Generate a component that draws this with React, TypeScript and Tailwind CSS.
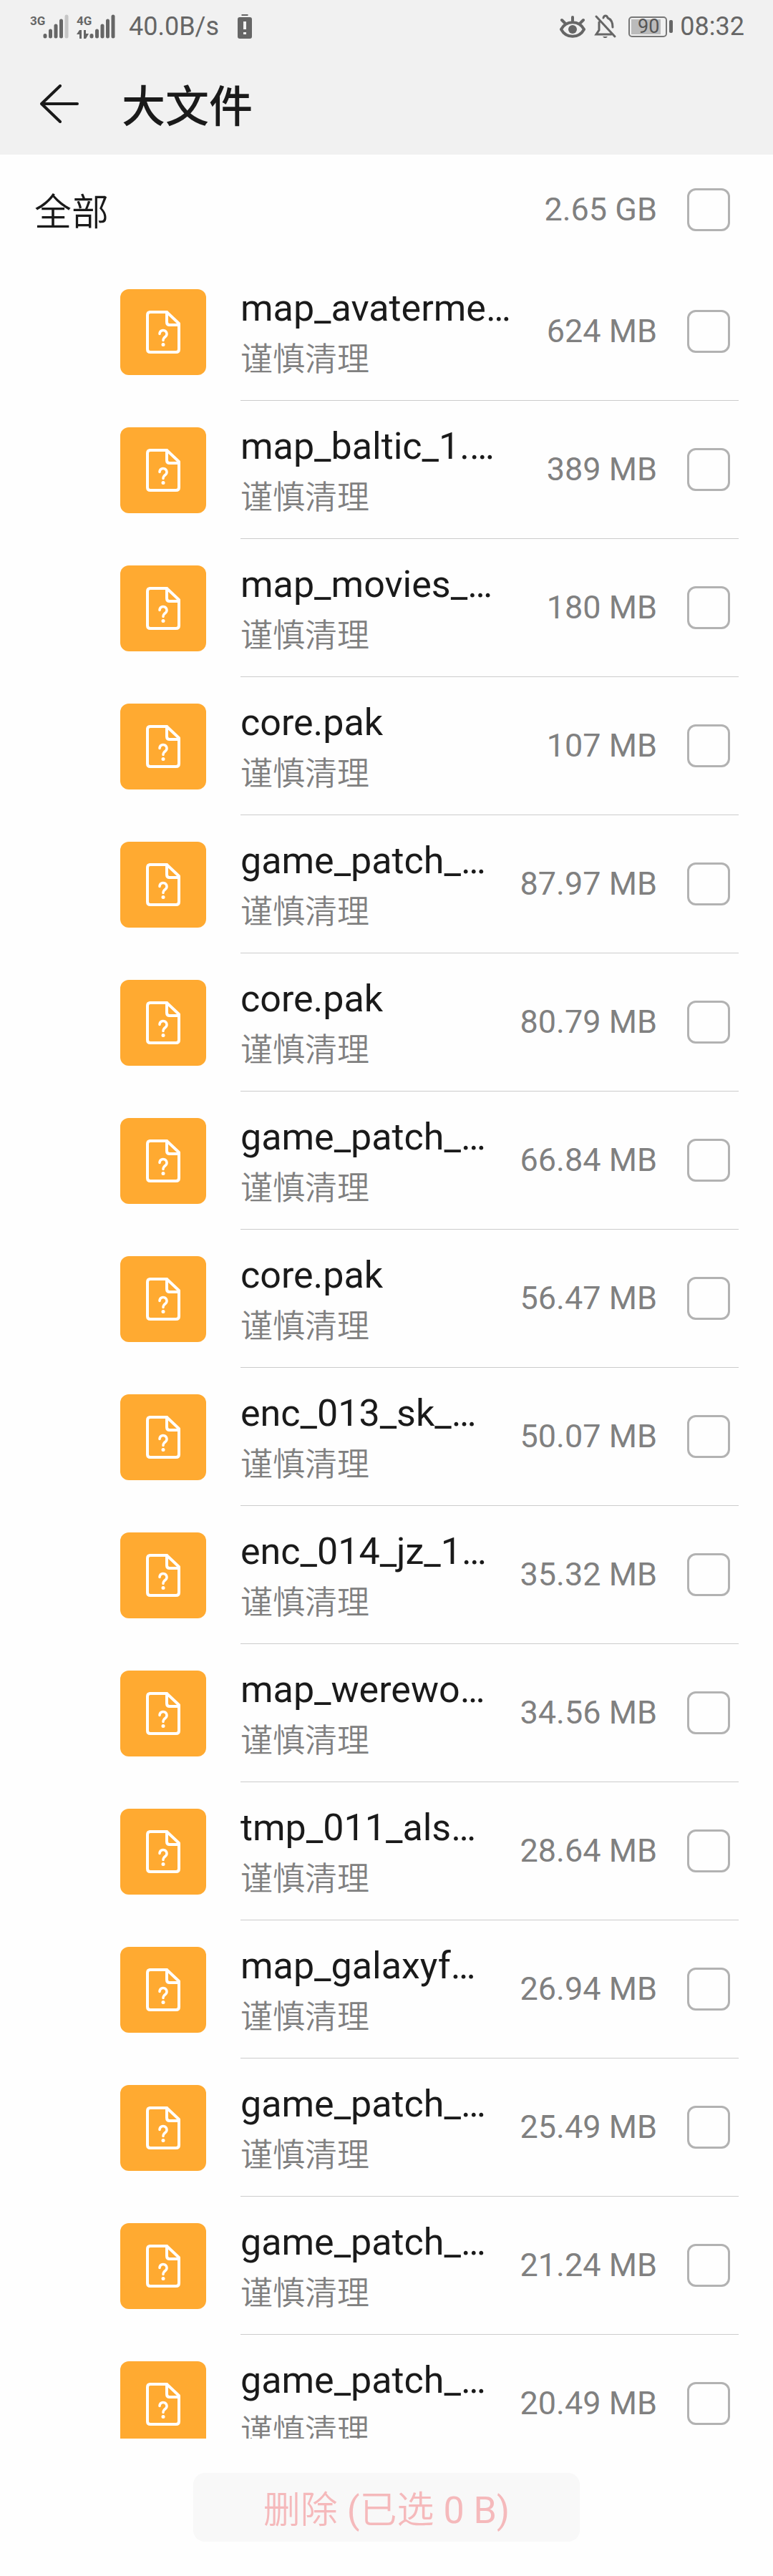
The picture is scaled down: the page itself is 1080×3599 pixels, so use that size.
import { useState } from 'react';

interface FileItem {
  id: number;
  name: string;
  size: string;
}

const files: FileItem[] = [
  { id: 1, name: 'map_avaterme…', size: '624 MB' },
  { id: 2, name: 'map_baltic_1.…', size: '389 MB' },
  { id: 3, name: 'map_movies_…', size: '180 MB' },
  { id: 4, name: 'core.pak', size: '107 MB' },
  { id: 5, name: 'game_patch_…', size: '87.97 MB' },
  { id: 6, name: 'core.pak', size: '80.79 MB' },
  { id: 7, name: 'game_patch_…', size: '66.84 MB' },
  { id: 8, name: 'core.pak', size: '56.47 MB' },
  { id: 9, name: 'enc_013_sk_…', size: '50.07 MB' },
  { id: 10, name: 'enc_014_jz_1…', size: '35.32 MB' },
  { id: 11, name: 'map_werewo…', size: '34.56 MB' },
  { id: 12, name: 'tmp_011_als…', size: '28.64 MB' },
  { id: 13, name: 'map_galaxyf…', size: '26.94 MB' },
  { id: 14, name: 'game_patch_…', size: '25.49 MB' },
  { id: 15, name: 'game_patch_…', size: '21.24 MB' },
  { id: 16, name: 'game_patch_…', size: '20.49 MB' },
];

function SignalBars({ weak }: { weak?: boolean }) {
  return (
    <svg width="36" height="34" viewBox="0 0 36 34" stroke="#666" strokeWidth="5" strokeLinecap="round">
      <path d="M3 29.500v1.500M10.500 23v8M18 16v15M25.500 9v22" />
      <path d="M33 3v28" stroke={weak ? '#c6c6c6' : '#666'} />
    </svg>
  );
}

function StatusBar() {
  return (
    <div className="flex h-[74px] items-center justify-between pl-[42px] pr-10 text-[36px] leading-[42px] text-[#666]">
      <div className="flex items-center">
        <div className="flex">
          <span className="h-[34px] w-[18px] text-[17px] leading-[18px] font-bold">3G</span>
          <SignalBars weak />
        </div>
        <div className="ml-[11px] flex">
          <div className="flex h-[34px] w-[18px] flex-col justify-between">
            <span className="text-[17px] leading-[18px] font-bold">4G</span>
            <svg width="17" height="12" viewBox="0 0 17 12" fill="#666">
              <path d="M4 0h3v12H4V6H0zM10 0h3v5h4l-4 7h-3z" />
            </svg>
          </div>
          <SignalBars />
        </div>
        <span className="ml-[19px]">40.0B/s</span>
        <svg className="ml-[26px]" width="20" height="34" viewBox="0 0 20 34">
          <path d="M5.500 1h9" stroke="#666" strokeWidth="2" />
          <rect y="4" width="20" height="30" rx="3" fill="#666" />
          <path d="M10 10v11M10 25v3" stroke="#f1f1f1" strokeWidth="4" />
        </svg>
      </div>
      <div className="flex items-center">
        <svg width="36" height="34" viewBox="0 0 36 34" fill="none" stroke="#666" strokeWidth="4" strokeLinecap="round">
          <path d="M2 21C9 8 27 8 34 21C27 34 9 34 2 21ZM18 9V4M7 12L3 8M29 12L33 8" />
          <circle cx="18" cy="21" r="6" fill="#666" stroke="none" />
        </svg>
        <svg className="ml-3" width="32" height="34" viewBox="0 0 32 34" fill="none" stroke="#666" strokeWidth="3">
          <path d="M3 3l26 28M13 5c1-4 5-4 6 0c5 2 7 6 7 13M7 11v11l-4 6h21" strokeLinecap="round" />
          <path d="M12 31h7l-2 2h-3z" fill="#666" stroke="none" />
        </svg>
        <div className="ml-4 flex items-center gap-[3px]">
          <div className="h-[29px] w-[54px] rounded-[5px] border-2 border-[#777] p-[2px]">
            <div className="flex h-full w-[41px] items-center justify-end bg-[#bbb] pr-[2px] text-[27px] leading-[21px] text-[#555]">90</div>
          </div>
          <div className="h-[18px] w-[5px] rounded-[2px] bg-[#666]" />
        </div>
        <span className="ml-[10px]">08:32</span>
      </div>
    </div>
  );
}

function FileIcon() {
  return (
    <div className="flex size-[120px] shrink-0 items-center justify-center rounded-xl bg-[#ffaa31]">
      <svg width="48" height="60" viewBox="0 0 48 60" fill="none" stroke="#fff" strokeWidth="4" strokeLinejoin="round" strokeLinecap="round">
        <path d="M5 2h24l17 16v36q0 4-4 4H6q-4 0-4-4V6q0-4 4-4" />
        <path d="M29 2v14q0 4 4 4h13" />
        <path d="M19 32.500a5 5 0 1 1 8.500 3.500q-3.500 2.500-3.500 5.500" strokeWidth="3.500" />
        <circle cx="24" cy="47.500" r="2.500" fill="#fff" stroke="none" />
      </svg>
    </div>
  );
}

function CheckBox({ id, checked, onChange }: { id: string; checked: boolean; onChange: () => void }) {
  return (
    <input
      id={id}
      type="checkbox"
      checked={checked}
      onChange={onChange}
      className="ml-[42px] mr-3 size-[60px] shrink-0 appearance-none rounded-xl border-3 border-[#b2b2b2] checked:border-[#007dff] checked:bg-[#007dff]"
    />
  );
}

export default function App() {
  const [selected, setSelected] = useState<number[]>([]);
  const allSelected = selected.length === files.length;

  const toggle = (id: number) => {
    setSelected(selected.includes(id) ? selected.filter(s => s !== id) : [...selected, id]);
  };

  return (
    <div className="flex h-screen flex-col bg-[#fefefe] font-[Roboto,'Noto_Sans_CJK_SC',sans-serif] text-[#1a1a1a]">
      <header className="bg-[#f1f1f1]">
        <StatusBar />
        <div className="flex h-[142px] items-center pl-14">
          <button type="button" aria-label="返回">
            <svg width="54" height="54" viewBox="0 0 54 54" fill="none" stroke="#1a1a1a" strokeWidth="4" strokeLinecap="round" strokeLinejoin="round">
              <path d="M28 2L2 27l26 25M2 27h50" />
            </svg>
          </button>
          <h1 className="ml-[60px] font-['Noto_Sans_CJK_SC',sans-serif] text-[61px] leading-[72px] font-[450]">大文件</h1>
        </div>
      </header>

      <main className="min-h-0 flex-1 overflow-y-auto pr-12 [scrollbar-width:none]">
        {/* Select all */}
        <div className="flex items-center pt-[47px] pb-11 pl-12">
          <label htmlFor="all" className="flex-1 font-['Noto_Sans_CJK_SC',sans-serif] text-[52px] leading-[60px] font-[350]">全部</label>
          <span className="text-[45px] leading-[60px] text-[#808080]">2.65 GB</span>
          <CheckBox id="all" checked={allSelected} onChange={() => setSelected(allSelected ? [] : files.map(f => f.id))} />
        </div>

        <ul className="pl-[168px]">
          {files.map((file) => (
            <li key={file.id} className="flex items-center">
              <FileIcon />
              <div className="ml-12 flex h-[193px] min-w-0 flex-1 items-center border-b border-[#ccc]">
                <label htmlFor={`file-${file.id}`} className="min-w-0 flex-1 whitespace-nowrap">
                  <span className="block text-[52px] leading-[72px]">{file.name}</span>
                  <span className="block font-['Noto_Sans_CJK_SC',sans-serif] text-[45px] leading-[64px] font-[350] text-[#808080]">谨慎清理</span>
                </label>
                <span className="text-[45px] leading-[60px] whitespace-nowrap text-[#808080]">{file.size}</span>
                <CheckBox id={`file-${file.id}`} checked={selected.includes(file.id)} onChange={() => toggle(file.id)} />
              </div>
            </li>
          ))}
        </ul>
      </main>

      <footer className="flex justify-center py-12">
        <button
          type="button"
          disabled={selected.length === 0}
          className="h-24 w-1/2 rounded-2xl bg-[#f8f8f8] font-['Noto_Sans_CJK_SC',sans-serif] text-[52px] leading-[60px] font-[350] text-[#fa2a2d] disabled:text-[#f5b9bb]"
        >
          删除<span className="font-[Roboto,sans-serif] leading-none font-normal"> (</span>
          已选<span className="font-[Roboto,sans-serif] leading-none font-normal"> 0 B)</span>
        </button>
      </footer>
    </div>
  );
}
